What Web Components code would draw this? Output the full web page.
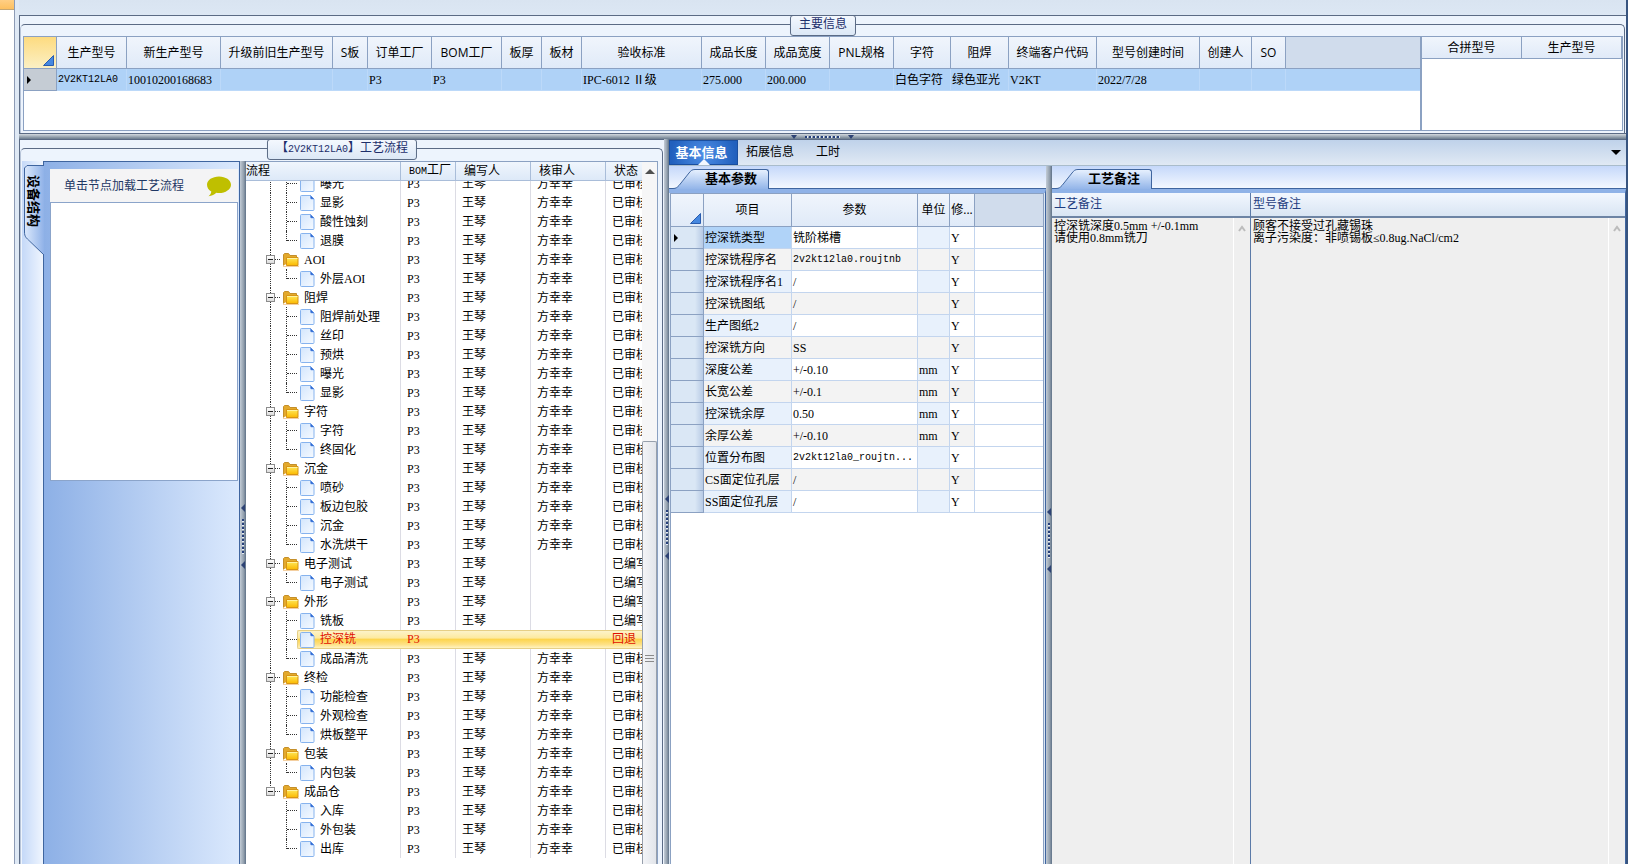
<!DOCTYPE html>
<html lang="zh-CN">
<head>
<meta charset="UTF-8">
<title>工艺流程</title>
<style>
  html, body { height: 100%; margin: 0; }
  body {
    font: 12px/16px "Liberation Serif", "Noto Sans CJK SC", sans-serif;
    color: #000;
    background: #dbe6f3;
    overflow: hidden;
    --mono: "Liberation Mono", "Noto Sans CJK SC", monospace;
    --sans: "Open Sans", "Noto Sans CJK SC", sans-serif;
    --line: #5b6b85;
    --grid-line: #8ba1c2;
  }
</style>
</head>
<body>
<process-app></process-app>

<script>
const DOC_ICON = `<svg width="15" height="16" viewBox="0 0 15 16" aria-hidden="true">
  <defs><linearGradient id="p" x1="0" y1="0" x2="1" y2="1"><stop offset="0" stop-color="#d3e6fd"/><stop offset="1" stop-color="#f6faff"/></linearGradient></defs>
  <path d="M1.500.5h9l3.500 3.500v10.500a1 1 0 0 1-1 1h-11.500a1 1 0 0 1-1-1v-13a1 1 0 0 1 1-1z" fill="url(#p)" stroke="#86b3ee"/>
  <path d="M10.500.5l3.500 3.500h-2.500a1 1 0 0 1-1-1z" fill="#2f68d0" stroke="#5a8fe4" stroke-width=".5"/></svg>`;

const FOLDER_ICON = `<svg width="16" height="14" viewBox="0 0 16 14" aria-hidden="true">
  <defs><linearGradient id="f" x1="0" y1="0" x2="0" y2="1"><stop offset="0" stop-color="#ffe95a"/><stop offset="1" stop-color="#fbb800"/></linearGradient></defs>
  <path d="M.5 12.500V1.500l1-1h4l1.500 2h6.500v3" fill="#e3a92c" stroke="#c48f2a"/>
  <path d="M3.500 12.500v-8h11.500v8z" fill="url(#f)" stroke="#d79413"/>
  <path d="M4 5.500h10.500" stroke="#fff3a0"/><path d="M0 13.500h16" stroke="#f4cfa0"/></svg>`;

const BUBBLE_ICON = `<svg width="24" height="21" viewBox="0 0 24 21" aria-hidden="true">
  <path d="M12 .5c6.600 0 12 3.600 12 8.200s-5.400 8.300-12 8.300c-1 0-1.800 0-2.700-.2C7.500 18.500 5 20 1.500 20.300c1.500-1.200 2.600-2.800 2.800-4.800C1.700 14 0 11.500 0 8.700 0 4.100 5.400.5 12 .5z" fill="#bfbf00"/></svg>`;

class AppSplitter extends HTMLElement {
  connectedCallback() {
    this.attachShadow({ mode: 'open' });
    this.shadowRoot.innerHTML = `
      <style>
        :host {
          flex: none;
          display: flex;
          flex-direction: column;
          align-items: center;
          width: 6px;
          box-sizing: border-box;
          gap: 7px;
          padding-top: var(--grip-top, 340px);
          background: linear-gradient(90deg, #c3ccd6, #93a0ae 60%, #5f7288);
        }
        :host([horizontal]) {
          flex-direction: row;
          justify-content: center;
          width: auto;
          height: 5px;
          gap: 8px;
          padding: 0;
          background: linear-gradient(#d3d9df, #8997a5 70%, #6c7c8e);
        }
        .arrow { width: 0; height: 0; border: 4px solid transparent; border-left: 0; border-right-color: #2d4274; }
        .dots { width: 2px; height: 35px; background: repeating-linear-gradient(#26407c 0 2px, #e6ecf5 2px 3px, transparent 3px 4px); }
        :host([horizontal]) .arrow { border: 3px solid transparent; border-bottom: 0; border-top: 4px solid #2d4274; }
        :host([horizontal]) .dots { width: 35px; height: 2px; background: repeating-linear-gradient(90deg, #26407c 0 2px, #e6ecf5 2px 3px, transparent 3px 4px); }
      </style>
      <div class="arrow"></div><div class="dots"></div><div class="arrow"></div>
    `;
  }
}
customElements.define('app-splitter', AppSplitter);

class GroupPanel extends HTMLElement {
  connectedCallback() {
    this.attachShadow({ mode: 'open' });
    this.shadowRoot.innerHTML = `
      <style>
        :host {
          display: flex;
          position: relative;
          box-sizing: border-box;
          padding: 8px 1px 0 0;
          border: 1px solid var(--line);
          border-right-width: 0;
          background: #edf4fd;
        }
        .frame {
          flex: 1;
          min-width: 0;
          display: flex;
          box-sizing: border-box;
          border: 1px solid var(--line);
          border-left-color: #b7c4d8;
          border-bottom: 0;
          border-radius: 5px 5px 0 0;
          padding: var(--frame-pad, 10px 2px 0);
        }
        .title {
          position: absolute;
          top: -1px;
          left: 50%;
          transform: translateX(-50%);
          box-sizing: border-box;
          height: 21px;
          padding: 0 8px;
          border: 1px solid var(--line);
          border-radius: 3px;
          background: linear-gradient(#f4f8fe, #dce8f6);
          color: #1e2f6b;
          line-height: 16px;
          white-space: nowrap;
        }
      </style>
      <div class="frame"><slot></slot></div>
      <div class="title"><slot name="title"></slot></div>
    `;
  }
}
customElements.define('group-panel', GroupPanel);

// Table with an optional row header column; a trailing column without a width fills the rest.
class DataGrid extends HTMLElement {
  set data({ columns, rows = [], rowHead = true, filler = true }) {
    this.columns = columns;
    this.rows = rows;
    this.rowHead = rowHead;
    this.filler = filler;
    this.render();
  }

  cell(value, col) {
    const mono = /^2v2kt/i.test(value);
    return `<td class="${col.kind || ''} ${mono ? 'mono' : ''}">${value}</td>`;
  }

  render() {
    if (!this.shadowRoot) this.attachShadow({ mode: 'open' });
    const cols = this.columns.map(c => `<col${c.width ? ` style="width:${c.width}px"` : ''}>`).join('');
    const heads = this.columns.map(c => `<th scope="col">${c.label}</th>`).join('');
    const body = this.rows.map((row, r) => `
      <tr>
        ${this.rowHead ? `<td class="rh">${r === 0 ? '<i class="cur"></i>' : ''}</td>` : ''}
        ${this.columns.map((c, i) => this.cell(row[i] || '', c)).join('')}
        ${this.filler ? '<td class="fill"></td>' : ''}
      </tr>`).join('');
    this.shadowRoot.innerHTML = `
      <style>
        :host { display: block; box-sizing: border-box; background: #fff; border: 1px solid var(--grid-line); overflow: hidden; }
        table { width: 100%; table-layout: fixed; border-collapse: separate; border-spacing: 0; }
        th, td { box-sizing: border-box; padding: 0; white-space: nowrap; overflow: hidden; }
        th {
          height: var(--head-h, 33px);
          font: 12px/16px var(--sans);
          text-align: center;
          background: linear-gradient(#f0f5fc, #e0eaf8);
          border-right: 1px solid var(--grid-line);
          border-bottom: 1px solid var(--grid-line);
        }
        th.fill { background: #d0dcec; border-right: 0; }
        th.corner { vertical-align: bottom; }
        .corner svg { display: block; margin: 0 2px 2px auto; }
        td { height: 22px; padding-left: 1px; border-right: 1px solid #c3d5ee; border-bottom: 1px solid #c3d5ee; }
        td.fill { border-right: 0; }
        .mono { font: 10px/16px var(--mono); }
        .rh {
          border-color: var(--grid-line);
          background: linear-gradient(90deg, #dae7f5 75%, #b7cae5);
          padding-left: 3px;
        }
        .cur { display: block; width: 0; height: 0; border: 4px solid transparent; border-left-color: #000; border-right: 0; }
        :host([master]) .corner { background: linear-gradient(#fddb80, #fbf0c4); }
        :host([master]) tbody td { background: #afd2f7; border-color: #bcd9f9; }
        :host([master]) tbody .rh { background: #c5ccd4; border-color: var(--grid-line); }
        :host([params]) tr:nth-child(odd) .tint { background: #e8f1fc; }
        :host([params]) tr:nth-child(even) td:not(.rh):not(.fill) { background: #f3f3f3; }
        :host([params]) tr:first-child td:nth-child(2) { background: #b0d3f8; }
      </style>
      <table>
        <colgroup>${this.rowHead ? '<col style="width:33px">' : ''}${cols}${this.filler ? '<col>' : ''}</colgroup>
        <thead><tr>
          ${this.rowHead ? '<th class="corner"><svg width="11" height="11" viewBox="0 0 11 11" aria-hidden="true"><path d="M10.500 .5v10H.5z" fill="#4688e0" stroke="#2a5cae"/></svg></th>' : ''}
          ${heads}
          ${this.filler ? '<th class="fill"></th>' : ''}
        </tr></thead>
        <tbody>${body}</tbody>
      </table>
    `;
  }
}
customElements.define('data-grid', DataGrid);

class EquipmentDock extends HTMLElement {
  connectedCallback() {
    this.attachShadow({ mode: 'open' });
    this.shadowRoot.innerHTML = `
      <style>
        :host { display: flex; flex: none; width: 218px; }
        .strip { width: 21px; flex: none; background: linear-gradient(90deg, #c5d9f8, #eff5fe); border-right: 1px solid #3f659f; }
        button {
          position: relative;
          display: block;
          width: 22px;
          height: 92px;
          padding: 0;
          margin-top: 4px;
          border: 0;
          background: none;
          color: #000;
        }
        button svg { position: absolute; left: 2px; top: 0; }
        button span {
          position: absolute;
          left: 4px;
          top: 10px;
          font: bold 13px/16px "Noto Sans CJK SC", sans-serif;
          writing-mode: vertical-rl;
          text-orientation: sideways;
          white-space: nowrap;
        }
        .body {
          flex: 1;
          display: flex;
          flex-direction: column;
          padding: 7px 1px 0 6px;
          border-top: 1px solid #3f659f;
          border-right: 1px solid #3f659f;
          background: linear-gradient(90deg, #8db0e6, #dbe9fd);
        }
        .tip {
          display: flex;
          align-items: center;
          justify-content: space-between;
          height: 33px;
          padding: 0 7px 0 14px;
          background: #f4f4f5;
          color: #1f3864;
        }
        .tip svg { margin-top: 2px; }
        .tree { height: 279px; background: #fff; border: 1px solid #8ba4ca; box-sizing: border-box; }
      </style>
      <div class="strip">
        <button type="button"><svg width="20" height="92" viewBox="0 0 20 92" aria-hidden="true">
          <defs><linearGradient id="t"><stop offset="0" stop-color="#dce9fc"/><stop offset="1" stop-color="#90b2e8"/></linearGradient></defs>
          <path d="M20 .5H3L.5 3v64c0 5 2 6 5 9L20 90" fill="url(#t)" stroke="#3f659f"/></svg><span>设备结构</span></button>
      </div>
      <div class="body">
        <div class="tip">单击节点加载工艺流程${BUBBLE_ICON}</div>
        <div class="tree"></div>
      </div>
    `;
  }
}
customElements.define('equipment-dock', EquipmentDock);

class FlowTree extends HTMLElement {
  set nodes(groups) {
    this.groups = groups;
    this.render();
  }

  row(name, kind, flags) {
    const reviewer = flags.edit || flags.back ? '' : '方幸幸';
    const status = flags.back ? '回退' : flags.edit ? '已编写' : '已审核';
    const icon = kind === 'group'
      ? `<button type="button" aria-label="折叠"></button><i class="dash"></i>${FOLDER_ICON}`
      : `<i class="branch ${flags.last ? 'last' : ''}"></i>`;
    const label = kind === 'group'
      ? `<span class="name">${name}</span>`
      : `<span class="leaf">${DOC_ICON}<span>${name}</span></span>`;
    return `<tr class="${kind} ${flags.back ? 'back' : ''}">
      <td><div class="node ${flags.trunk || ''}">${icon}${label}</div></td>
      <td>P3</td><td>${flags.back ? '' : '王琴'}</td><td>${reviewer}</td><td>${status}</td></tr>`;
  }

  render() {
    this.attachShadow({ mode: 'open' });
    const end = this.groups.length - 1;
    const body = this.groups.map((g, gi) => {
      const head = g.name ? this.row(g.name, 'group', { edit: g.edit, trunk: gi === end ? 'half' : 'full' }) : '';
      return head + g.items.map((name, i) => this.row(name, 'item', {
        last: i === g.items.length - 1,
        trunk: gi === end ? '' : 'full',
        edit: g.edit && name !== '成品清洗',
        back: name === '控深铣'
      })).join('');
    }).join('');
    this.shadowRoot.innerHTML = `
      <style>
        :host { flex: 1; min-width: 0; display: flex; background: #fff; border: 1px solid var(--grid-line); border-width: 1px 1px 0 0; }
        .view { flex: 1; min-width: 0; overflow: hidden; display: flex; flex-direction: column; }
        table { width: 100%; table-layout: fixed; border-collapse: separate; border-spacing: 0; }
        th, td { padding: 0; text-align: left; font-weight: normal; white-space: nowrap; overflow: hidden; box-sizing: border-box; }
        th { height: 18px; padding-left: 8px; background: linear-gradient(#f0f6fd, #dde9f8); border-right: 1px solid #a9bdd9; border-bottom: 1px solid #a9bdd9; }
        th:first-child { padding-left: 0; }
        th:last-child, td:last-child { border-right: 0; }
        .mono { font: 10px/16px var(--mono); }
        .rows { flex: 1; min-height: 0; overflow: hidden; }
        .rows table { margin-top: -7px; }
        td { height: 19px; padding-left: 6px; border-right: 1px solid #dcdce4; line-height: 18px; }
        td:first-child { padding-left: 0; }
        .node { position: relative; display: flex; align-items: center; height: 19px; padding-left: 20px; }
        .item .node { padding-left: 40px; }
        .node::before { content: ""; position: absolute; left: 24px; top: 0; height: 100%; border-left: 1px dotted #333; }
        .node:not(.full)::before { height: 0; }
        .node.half::before { height: 8px; }
        button { position: relative; width: 9px; height: 9px; padding: 0; border: 1px solid #8c8c8c; background: linear-gradient(#fff, #dcdcdc); }
        button::after { content: ""; position: absolute; left: 1px; right: 1px; top: 3px; height: 1px; background: #222; }
        .dash { width: 5px; margin-right: 3px; border-top: 1px dotted #333; }
        .name { padding-left: 5px; }
        .branch { position: relative; align-self: stretch; width: 10px; border-left: 1px dotted #333; }
        .branch.last { align-self: flex-start; height: 10px; }
        .branch::after { content: ""; position: absolute; left: 0; top: 9px; width: 10px; border-top: 1px dotted #333; }
        .leaf { flex: 1; display: flex; align-items: center; height: 19px; gap: 5px; padding-left: 3px; box-sizing: border-box; }
        .back { color: #e01000; }
        .back .leaf, .back td:not(:first-child) {
          background: linear-gradient(#fdf3c8, #fdeaa0 40%, #fdd54f 50%, #fee288 80%, #fff3c0);
          border-top: 1px solid #e6cf86;
          border-bottom: 1px solid #e6cf86;
        }
        .back td { border-right: 0; line-height: 17px; }
        .back .leaf { border-left: 1px solid #e6cf86; border-radius: 2px 0 0 2px; padding-left: 2px; }
        .bar { flex: none; width: 15px; display: flex; flex-direction: column; align-items: center; background: #f6f6f7; }
        .up { width: 0; height: 0; margin: 7px 0 267px; border: 5px solid transparent; border-top: 0; border-bottom-color: #505050; }
        .thumb { flex: 1; width: 13px; display: flex; flex-direction: column; align-items: center; border: 1px solid #97a0ac; border-bottom: 0; border-radius: 2px 2px 0 0; background: linear-gradient(90deg, #f3f4f7, #e2e5ea); }
        .grip { width: 9px; height: 8px; margin-top: 213px; background: repeating-linear-gradient(#8a8a8a 0 1px, transparent 1px 3px); }
      </style>
      <div class="view">
        <table>
          <colgroup><col style="width:155px"><col style="width:55px"><col style="width:75px"><col style="width:75px"><col></colgroup>
          <thead><tr><th>流程</th><th><span class="mono">BOM</span>工厂</th><th>编写人</th><th>核审人</th><th>状态</th></tr></thead>
        </table>
        <div class="rows"><table>
          <colgroup><col style="width:155px"><col style="width:55px"><col style="width:75px"><col style="width:75px"><col></colgroup>
          <tbody>${body}</tbody>
        </table></div>
      </div>
      <div class="bar"><div class="up"></div><div class="thumb"><div class="grip"></div></div></div>
    `;
  }
}
customElements.define('flow-tree', FlowTree);

class NavTabs extends HTMLElement {
  connectedCallback() {
    this.attachShadow({ mode: 'open' });
    this.shadowRoot.innerHTML = `
      <style>
        :host { flex: none; display: flex; height: 26px; box-sizing: border-box; background: linear-gradient(#bfd2ea, #e0e9f4); border-bottom: 1px solid #a9bccb; }
        button { margin: 0; border: 0; padding: 0 14px 2px 8px; background: none; color: #000; font: inherit; }
        .on {
          position: relative;
          width: 69px;
          padding: 0 4px 2px 0;
          color: #fff;
          font: bold 13px/16px "Noto Sans CJK SC", sans-serif;
          background: radial-gradient(circle at 50% 60%, #4d8ee6, #2160bd 90%);
          border: 1px solid #1b4f9e;
        }
        .on::after { content: ""; position: absolute; left: 28px; bottom: -1px; border: 6px solid transparent; border-top: 0; border-bottom-color: #f3f8ff; }
        .more { margin-left: auto; padding: 0 5px 0 0; }
        .more i { display: block; border: 5px solid transparent; border-bottom: 0; border-top-color: #000; }
      </style>
      <button type="button" class="on">基本信息</button>
      <button type="button">拓展信息</button>
      <button type="button">工时</button>
      <button type="button" class="more" aria-label="更多"><i></i></button>
    `;
  }
}
customElements.define('nav-tabs', NavTabs);

class TabSheet extends HTMLElement {
  connectedCallback() {
    this.attachShadow({ mode: 'open' });
    this.shadowRoot.innerHTML = `
      <style>
        :host { display: flex; flex-direction: column; min-width: 0; }
        .strip { flex: none; display: flex; align-items: flex-end; height: 23px; padding-left: 4px; background: linear-gradient(#c5d8fa, #f5f9ff); box-shadow: inset 0 -1px #3f659f; }
        .strip svg { display: block; }
        button {
          height: 20px;
          width: 74px;
          margin: 0;
          padding: 0 0 4px 10px;
          border: 1px solid #3f659f;
          border-width: 1px 1px 0 0;
          border-radius: 0 3px 0 0;
          background: linear-gradient(#e6f0fe, #93b5e9);
          font: bold 13px/16px "Noto Sans CJK SC", sans-serif;
          color: #000;
          text-align: left;
          white-space: nowrap;
        }
        .body { flex: 1; min-height: 0; display: flex; border-top: 4px solid #8fb2e7; border-right: 1px solid #3f659f; }
      </style>
      <div class="strip">
        <svg width="22" height="20" viewBox="0 0 22 20" aria-hidden="true">
          <defs><linearGradient id="s" x1="0" y1="0" x2="0" y2="1"><stop offset="0" stop-color="#e6f0fe"/><stop offset="1" stop-color="#93b5e9"/></linearGradient></defs>
          <path d="M0 19.500c3 0 4-1 6-3L16 4c2-2.500 3-3.500 6-3.500V20H0z" fill="url(#s)"/>
          <path d="M0 19.500c3 0 4-1 6-3L16 4c2-2.500 3-3.500 6-3.500" fill="none" stroke="#3f659f"/></svg>
        <button type="button">${this.getAttribute('label')}</button>
      </div>
      <div class="body"><slot></slot></div>
    `;
  }
}
customElements.define('tab-sheet', TabSheet);

class NoteBox extends HTMLElement {
  connectedCallback() {
    this.attachShadow({ mode: 'open' });
    this.shadowRoot.innerHTML = `
      <style>
        :host { display: flex; flex-direction: column; min-width: 0; background: #efefef; border-right: 1px solid #5b7aa8; }
        label { flex: none; height: 25px; padding: 0 2px; line-height: 23px; color: #1e3c80; background: linear-gradient(#f2f7fe, #d9e5f3); border-bottom: 2px solid #6d84a4; box-sizing: border-box; }
        .area { flex: 1; display: flex; }
        textarea {
          flex: 1;
          min-width: 0;
          box-sizing: border-box;
          margin: 0;
          padding: 2px 0 0 2px;
          border: 0;
          outline: 0;
          resize: none;
          overflow: hidden;
          background: none;
          color: #000;
          font: inherit;
          line-height: 12px;
        }
        .gutter { flex: none; width: 16px; border-left: 1px solid #fff; }
        svg { display: block; margin: 7px 4px; }
      </style>
      <label for="note">${this.getAttribute('label')}</label>
      <div class="area">
        <textarea id="note" readonly>${this.textContent.trim()}</textarea>
        <div class="gutter"><svg width="8" height="7" viewBox="0 0 8 7" aria-hidden="true"><path d="M1 6l3-4 3 4" fill="none" stroke="#bcbcbc" stroke-width="2"/></svg></div>
      </div>
    `;
  }
}
customElements.define('note-box', NoteBox);

class ProcessApp extends HTMLElement {
  connectedCallback() {
    this.attachShadow({ mode: 'open' });
    this.shadowRoot.innerHTML = `
      <style>
        :host { display: flex; height: 100vh; overflow: hidden; }
        .edge { flex: none; width: 14px; background: #fff; border-right: 1px solid #8d9bb5; }
        .edge div { height: 9px; background: linear-gradient(#ffcf85, #fdc060); border-bottom: 1px solid #c5a672; }
        .gap { flex: none; width: 4px; background: #dfe9f5; }
        main { flex: 1; min-width: 0; display: flex; flex-direction: column; border-right: 2px solid #38547f; }
        .top { flex: none; height: 15px; background: linear-gradient(#d9e4f1, #dce7f4); }
        .master { --frame-pad: 11px 1px 2px 2px; height: 119px; flex: none; }
        .master data-grid[master] { flex: 1; min-width: 0; --head-h: 32px; }
        .merge { flex: none; width: 202px; --head-h: 22px; }
        .work { flex: 1; min-height: 0; display: flex; }
        .flow { flex: none; width: 645px; --frame-pad: 12px 4px 0 1px; border-bottom: 0; }
        .flow + app-splitter { width: 5px; }
        .detail { flex: 1; min-width: 0; display: flex; flex-direction: column; border-top: 1px solid var(--line); }
        .sheets { flex: 1; min-height: 0; display: flex; }
        .params { flex: none; width: 377px; }
        .params data-grid { flex: 1; margin: 0 1px; border-bottom: 0; }
        .notes { flex: 1; }
        .notes note-box:first-child { flex: none; width: 198px; }
        .notes note-box:last-child { flex: 1; border-right: 0; }
        .mono { font: 10px/15px var(--mono); }
      </style>
      <div class="edge"><div></div></div>
      <div class="gap"></div>
      <main>
        <div class="top"></div>
        <group-panel class="master">
          <span slot="title">主要信息</span>
          <data-grid master></data-grid>
          <data-grid class="merge"></data-grid>
        </group-panel>
        <app-splitter horizontal></app-splitter>
        <div class="work">
          <group-panel class="flow">
            <span slot="title">【<span class="mono">2V2KT12LA0</span>】工艺流程</span>
            <equipment-dock></equipment-dock>
            <app-splitter style="--grip-top: 343px"></app-splitter>
            <flow-tree></flow-tree>
          </group-panel>
          <app-splitter style="--grip-top: 356px"></app-splitter>
          <div class="detail">
            <nav-tabs></nav-tabs>
            <div class="sheets">
              <tab-sheet class="params" label="基本参数"><data-grid params></data-grid></tab-sheet>
              <app-splitter style="--grip-top: 342px"></app-splitter>
              <tab-sheet class="notes" label="工艺备注">
                <note-box label="工艺备注">控深铣深度0.5mm +/-0.1mm\n请使用0.8mm铣刀</note-box>
                <note-box label="型号备注">顾客不接受过孔藏锡珠\n离子污染度：非喷锡板≤0.8ug.NaCl/cm2</note-box>
              </tab-sheet>
            </div>
          </div>
        </div>
      </main>
    `;
    this.fill();
  }

  fill() {
    const $ = s => this.shadowRoot.querySelector(s);
    const heads = [['生产型号', 70], ['新生产型号', 94], ['升级前旧生产型号', 112], ['S板', 35], ['订单工厂', 64],
      ['BOM工厂', 70], ['板厚', 40], ['板材', 40], ['验收标准', 120], ['成品长度', 64], ['成品宽度', 64], ['PNL规格', 64],
      ['字符', 57], ['阻焊', 58], ['终端客户代码', 88], ['型号创建时间', 103], ['创建人', 52], ['SO', 34]];
    $('[master]').data = {
      columns: heads.map(([label, width]) => ({ label, width })),
      rows: [['2V2KT12LA0', '10010200168683', '', '', 'P3', 'P3', '', '', 'IPC-6012 Ⅱ级', '275.000', '200.000', '',
        '白色字符', '绿色亚光', 'V2KT', '2022/7/28']]
    };
    $('.merge').data = { columns: [{ label: '合拼型号' }, { label: '生产型号' }], rowHead: false, filler: false };
    $('[params]').data = {
      columns: [{ label: '项目', width: 88, kind: 'tint' }, { label: '参数', width: 126 },
        { label: '单位', width: 32, kind: 'tint' }, { label: '修...', width: 25 }],
      rows: [
        ['控深铣类型', '铣阶梯槽', '', 'Y'],
        ['控深铣程序名', '2v2kt12la0.roujtnb', '', 'Y'],
        ['控深铣程序名1', '/', '', 'Y'],
        ['控深铣图纸', '/', '', 'Y'],
        ['生产图纸2', '/', '', 'Y'],
        ['控深铣方向', 'SS', '', 'Y'],
        ['深度公差', '+/-0.10', 'mm', 'Y'],
        ['长宽公差', '+/-0.1', 'mm', 'Y'],
        ['控深铣余厚', '0.50', 'mm', 'Y'],
        ['余厚公差', '+/-0.10', 'mm', 'Y'],
        ['位置分布图', '2v2kt12la0_roujtn...', '', 'Y'],
        ['CS面定位孔层', '/', '', 'Y'],
        ['SS面定位孔层', '/', '', 'Y']
      ]
    };
    $('flow-tree').nodes = [
      { items: ['曝光', '显影', '酸性蚀刻', '退膜'] },
      { name: 'AOI', items: ['外层AOI'] },
      { name: '阻焊', items: ['阻焊前处理', '丝印', '预烘', '曝光', '显影'] },
      { name: '字符', items: ['字符', '终固化'] },
      { name: '沉金', items: ['喷砂', '板边包胶', '沉金', '水洗烘干'] },
      { name: '电子测试', items: ['电子测试'], edit: true },
      { name: '外形', items: ['铣板', '控深铣', '成品清洗'], edit: true },
      { name: '终检', items: ['功能检查', '外观检查', '烘板整平'] },
      { name: '包装', items: ['内包装'] },
      { name: '成品仓', items: ['入库', '外包装', '出库'] }
    ];
  }
}
customElements.define('process-app', ProcessApp);
</script>
</body>
</html>
